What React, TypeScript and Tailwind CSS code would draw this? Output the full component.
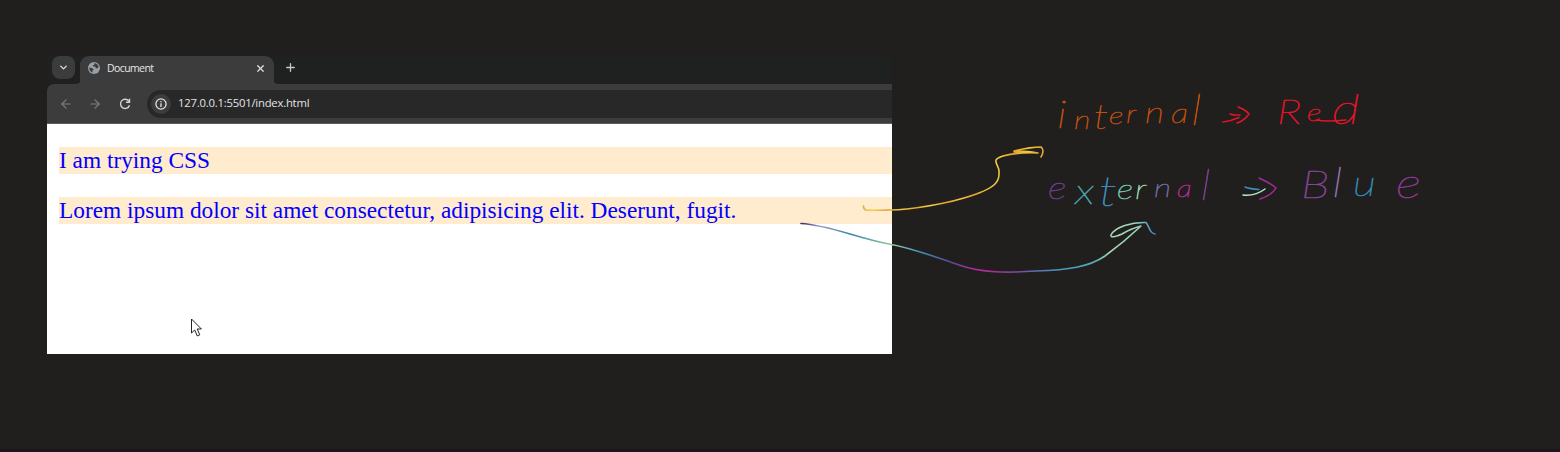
import React from "react";
import { ArrowLeft, ArrowRight, ChevronDown, Plus, X } from "lucide-react";

function GlobeIcon() {
  return (
    <svg width="12" height="12" viewBox="0 0 12 12" className="shrink-0">
      <circle cx="6" cy="6" r="6" fill="#9aa0a6" />
      <path d="M1.2 5.6 L3.5 6 Q5.8 6.3 5.7 8 L4.5 8.2 V10.7 Q1.4 9.4 1.2 5.6 Z" fill="#3c3c3c" />
      <path d="M6.2 1.2 Q9.7 1.5 10.6 4.7 L9.8 6.2 H7.8 L7.3 4.6 H5 V3.1 H6.4 Z" fill="#3c3c3c" />
    </svg>
  );
}

function ReloadIcon() {
  return (
    <svg width="12" height="12" viewBox="0 0 12 12" fill="none" stroke="#d6d6d6" strokeWidth="1.4">
      <path d="M10 3.4 A4.6 4.6 0 1 0 10.5 7.2" />
      <path d="M10.5 0.8 V4.3 H7" />
    </svg>
  );
}

function InfoIcon() {
  return (
    <svg width="12" height="12" viewBox="0 0 12 12" fill="none" stroke="#e3e3e3" strokeWidth="1.3">
      <circle cx="6" cy="6" r="5.1" />
      <path d="M6 5.2 V9 M6 2.9 V4.3" />
    </svg>
  );
}

function TabStrip() {
  return (
    <div className="flex h-[30px] bg-[#1f2020]">
      <div className="mt-[2px] ml-[5px] flex h-[23px] w-[23px] items-center justify-center rounded-[8px] bg-[#3c3c3c]">
        <ChevronDown size={11} strokeWidth={3} color="#dedede" />
      </div>
      <svg width="6" height="6" className="-mr-px self-end">
        <path d="M6 0 V6 H0 Q6 6 6 0 Z" fill="#3c3c3c" />
      </svg>
      <div className="mt-[2px] flex w-[194px] items-center rounded-t-[9px] bg-[#3c3c3c] pr-[8px] pb-[4px] pl-[8px]">
        <GlobeIcon />
        <span className="mt-px ml-[7px] text-[10.5px] leading-[15px] tracking-[-0.6px] text-[#e6e6e6]">Document</span>
        <X size={11} strokeWidth={2.6} color="#dedede" className="ml-auto" />
      </div>
      <svg width="6" height="6" className="-ml-px self-end">
        <path d="M0 0 V6 H6 Q0 6 0 0 Z" fill="#3c3c3c" />
      </svg>
      <Plus size={13} strokeWidth={2.4} color="#c8c8c8" className="mt-[7px] ml-[5px]" />
    </div>
  );
}

function Toolbar() {
  return (
    <div className="bg-[#1f2020]">
      <div className="flex h-[40px] items-center rounded-tl-[7px] border-b border-[#5c5c5c] bg-[#3c3c3c]">
        <ArrowLeft size={14} strokeWidth={2} color="#7f7f7f" className="ml-[12px]" />
        <ArrowRight size={14} strokeWidth={2} color="#7f7f7f" className="ml-[15px]" />
        <div className="ml-[17px]">
          <ReloadIcon />
        </div>
        <div className="ml-[16px] flex h-[28px] flex-1 items-center rounded-l-full bg-[#282828] pl-[4px]">
          <div className="flex h-[20px] w-[20px] items-center justify-center rounded-full bg-[#3c3c3c]">
            <InfoIcon />
          </div>
          <span className="ml-[7px] text-[11.3px] tracking-[-0.22px] text-[#e3e3e3]">127.0.0.1:5501/index.html</span>
        </div>
      </div>
    </div>
  );
}

function BrowserWindow() {
  return (
    <section className="mt-[54px] ml-[47px] h-[300px] w-[845px] overflow-hidden bg-white font-['Open_Sans',sans-serif]">
      <TabStrip />
      <Toolbar />
      <main className="flex flex-col gap-[23px] pt-[23px] pl-[12px] font-['Liberation_Serif',serif] text-[23.33px] leading-[27px] text-[#0000ff]">
        <p className="h-[27px] bg-[#ffebcd]">I am trying CSS</p>
        <p className="h-[27px] bg-[#ffebcd]">Lorem ipsum dolor sit amet consectetur, adipisicing elit. Deserunt, fugit.</p>
      </main>
    </section>
  );
}

const STRETCH = 1.3;

type Letter = [char: string, x: number, y: number, size: number, color: string];

const INTERNAL: Letter[] = [
  ["i", 1057, 128, 38, "#c2500d"],
  ["n", 1074, 129, 25, "#c2500d"],
  ["t", 1094, 129, 33, "#c2500d"],
  ["e", 1109, 124, 24, "#c2500d"],
  ["r", 1126, 123, 25, "#c2500d"],
  ["n", 1145, 123, 29, "#c2500d"],
  ["a", 1171, 123, 27, "#c2500d"],
  ["l", 1191, 125, 44, "#c2500d"],
];

const RED: Letter[] = [
  ["R", 1277, 124, 34, "#e4142a"],
  ["e", 1307, 121, 24, "#e4142a"],
  ["d", 1332, 124, 42, "#e4142a"],
];

const EXTERNAL: Letter[] = [
  ["e", 1048, 199, 31, "#6b3d8e"],
  ["x", 1075, 204, 36, "#49a8b4"],
  ["t", 1099, 206, 42, "#398fc0"],
  ["e", 1117, 199, 27, "#77cab4"],
  ["r", 1135, 199, 28, "#9cd7ad"],
  ["n", 1154, 197, 26, "#746dad"],
  ["a", 1177, 197, 23, "#b52b9c"],
  ["l", 1200, 200, 44, "#704291"],
];

const BLUE: Letter[] = [
  ["B", 1301, 198, 38, "#84459a"],
  ["l", 1332, 197, 42, "#8e71aa"],
  ["u", 1353, 196, 35, "#348cba"],
  ["e", 1396, 198, 42, "#8e3797"],
];

function Handwriting({ letters }: { letters: Letter[] }) {
  return (
    <text transform={`scale(${STRETCH} 1)`} strokeWidth="0.65">
      {letters.map(([char, x, y, size, color], i) => (
        <tspan key={i} x={x / STRETCH} y={y} fontSize={size} fill={color} stroke={color}>
          {char}
        </tspan>
      ))}
    </text>
  );
}

function Annotations() {
  return (
    <svg
      className="pointer-events-none absolute inset-0 font-['Lato',sans-serif] font-thin italic"
      width="1560"
      height="452"
      viewBox="0 0 1560 452"
      fill="none"
      strokeLinecap="round"
      strokeLinejoin="round"
    >
      <defs>
        <linearGradient id="galaxyLine" gradientUnits="userSpaceOnUse" x1="801" y1="0" x2="1155" y2="0">
          <stop offset="0" stopColor="#46245f" />
          <stop offset="0.05" stopColor="#929bc4" />
          <stop offset="0.14" stopColor="#3488ad" />
          <stop offset="0.26" stopColor="#93c99b" />
          <stop offset="0.34" stopColor="#3e8fbd" />
          <stop offset="0.42" stopColor="#564b98" />
          <stop offset="0.5" stopColor="#bd279e" />
          <stop offset="0.6" stopColor="#794398" />
          <stop offset="0.72" stopColor="#4c91c6" />
          <stop offset="0.83" stopColor="#50aeb3" />
          <stop offset="0.87" stopColor="#a7d6ae" />
          <stop offset="0.95" stopColor="#9bd6c1" />
          <stop offset="1" stopColor="#397fbd" />
        </linearGradient>
        <linearGradient id="goldLine" gradientUnits="userSpaceOnUse" x1="863" y1="0" x2="890" y2="6" spreadMethod="reflect">
          <stop offset="0" stopColor="#f4cf42" />
          <stop offset="0.5" stopColor="#dfa32f" />
          <stop offset="1" stopColor="#f1c83c" />
        </linearGradient>
        <linearGradient id="arrowHead" gradientUnits="userSpaceOnUse" x1="1242" y1="0" x2="1276" y2="0">
          <stop offset="0" stopColor="#7b3b92" />
          <stop offset="1" stopColor="#a9279a" />
        </linearGradient>
      </defs>

      <path
        d="M863.5 206 Q863.5 209.5 866 210 Q894 211 915 208 Q944 204 964 198 Q988 191 995 184 Q999 180 999 174 C1000 166 995 165 996 160 Q997 158 1003 156 Q1018 152 1038 153 Q1026 150 1014 152 L1033 152 L1014 151 Q1030 147 1041 147 Q1045 150 1041 157"
        stroke="url(#goldLine)"
        strokeWidth="1.6"
      />
      <path
        d="M801 223.5 C829 225 857 238 889 244 C916 249 938 258 959 265 C982 273 1007 273 1036 271 C1068 270 1089 267 1105 256 Q1124 242 1141 226 Q1130 229 1122 234 Q1110 239 1111 235 C1115 227 1132 222 1146 222.5 C1150 227 1149 233 1155 234"
        stroke="url(#galaxyLine)"
        strokeWidth="1.6"
      />

      <Handwriting letters={INTERNAL} />
      <path d="M1223 122 Q1231 121 1239 117.5 M1230 114 Q1234 115.5 1240 115" stroke="#e4142a" strokeWidth="1.5" />
      <path d="M1238 107 Q1246 110 1249 114 Q1244 121 1237 123" stroke="#e4142a" strokeWidth="1.5" />
      <Handwriting letters={RED} />
      <path d="M1316 120 Q1326 122 1346 120" stroke="#e4142a" strokeWidth="1.5" />

      <Handwriting letters={EXTERNAL} />
      <path d="M1245 187 Q1250 189 1259 189.5" stroke="#398fc0" strokeWidth="1.5" />
      <path d="M1243 195 C1253 196 1261 192 1265 189" stroke="#bee6cf" strokeWidth="1.5" />
      <path d="M1259 178 Q1272 184 1276 188 Q1272 195 1260 199" stroke="url(#arrowHead)" strokeWidth="1.5" />
      <Handwriting letters={BLUE} />
    </svg>
  );
}

function MousePointer() {
  return (
    <svg className="absolute top-[318px] left-[191px]" width="12" height="20" viewBox="0 0 12 20">
      <path d="M0.5 1 V15 L3.7 12 L6.3 18 L8.8 16.8 L6.2 11 H10.4 Z" fill="white" stroke="#222222" strokeWidth="1" />
    </svg>
  );
}

export default function App() {
  return (
    <div className="relative flex h-[452px] w-[1560px] items-start overflow-hidden border-b-[3px] border-[#1d171b] bg-[#211f1d]">
      <BrowserWindow />
      <Annotations />
      <MousePointer />
    </div>
  );
}
